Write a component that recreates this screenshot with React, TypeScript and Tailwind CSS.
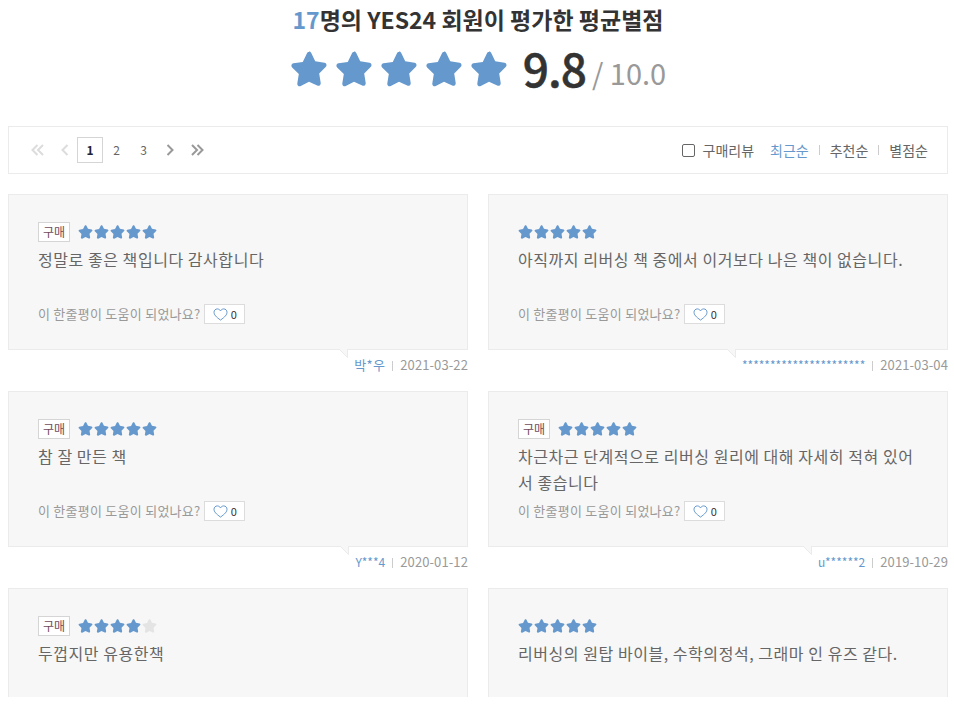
import React from 'react';

const reviews = [
  { buy: true, score: 5, text: '정말로 좋은 책입니다 감사합니다', user: '박*우', date: '2021-03-22', ko: true },
  { buy: false, score: 5, text: '아직까지 리버싱 책 중에서 이거보다 나은 책이 없습니다.', user: '**********************', date: '2021-03-04' },
  { buy: true, score: 5, text: '참 잘 만든 책', user: 'Y***4', date: '2020-01-12' },
  { buy: true, score: 5, text: '차근차근 단계적으로 리버싱 원리에 대해 자세히 적혀 있어서 좋습니다', user: 'u******2', date: '2019-10-29' },
  { buy: true, score: 4, text: '두껍지만 유용한책', user: '', date: '' },
  { buy: false, score: 5, text: '리버싱의 원탑 바이블, 수학의정석, 그래마 인 유즈 같다.', user: '', date: '' },
];

const STAR = 'M12 1.6c.6 0 1.1.3 1.4.9l2.7 5.6 6.1.9c1.3.2 1.8 1.8.9 2.7l-4.4 4.4 1 6.2c.2 1.3-1.1 2.3-2.3 1.7L12 21.5l-5.4 2.9c-1.2.6-2.5-.4-2.3-1.7l1-6.2-4.4-4.4c-.9-.9-.4-2.5.9-2.7l6.1-.9 2.7-5.6c.3-.6.8-.9 1.4-.9z';

function Star({ size, on = true }: { size: number; on?: boolean }) {
  return (
    <svg width={size} height={size} viewBox="0 0 24 25" className="block shrink-0">
      <path d={STAR} fill={on ? '#6598cd' : '#e4e4e4'} />
    </svg>
  );
}

function Chevron({ double, left, color }: { double?: boolean; left?: boolean; color: string }) {
  return (
    <svg width="14" height="12" viewBox="0 0 14 12" fill="none" stroke={color} strokeWidth="2" className={left ? 'rotate-180' : ''}>
      {double ? (
        <>
          <path d="M2 1l5 5-5 5" />
          <path d="M7.5 1l5 5-5 5" />
        </>
      ) : (
        <path d="M4.5 1l5 5-5 5" />
      )}
    </svg>
  );
}

function ReviewCard({ r }: { r: (typeof reviews)[number] }) {
  return (
    <div>
      <div className="h-[156px] border border-[#ebebeb] bg-[#f7f7f7] pl-[29px] pr-[30px] pt-[27px]">
        <div className="flex h-[20px] items-center">
          {r.buy && (
            <span className="mr-[8px] flex h-[20px] w-[32px] items-center justify-center border border-[#d5d5d5] bg-white pb-[1px] text-[12px] text-[#6f4a5c]">
              구매
            </span>
          )}
          <span className="-mt-[2px] flex gap-[1px]">
            {[1, 2, 3, 4, 5].map((i) => (
              <Star key={i} size={15} on={i <= r.score} />
            ))}
          </span>
        </div>
        <p className="mt-[4px] h-[52px] text-[16px] leading-[26px] tracking-[0.55px] text-[#666]">{r.text}</p>
        {/* last row is cut off by the page before this line */}
        {r.user && (
          <div className="mt-[6px] flex h-[20px] items-center text-[13px] tracking-[0.25px] text-[#999]">
            <span>이 한줄평이 도움이 되었나요?</span>
            <span className="ml-[4px] flex h-[20px] w-[41px] items-center justify-center gap-[3px] border border-[#dcdcdc] bg-white text-[11px] text-[#333]">
              <svg width="15" height="13" viewBox="0 0 24 21" fill="none" stroke="#6598cd" strokeWidth="1.6">
                <path d="M12 19.5C5 14.5 1.5 11 1.5 6.8 1.5 3.7 3.9 1.5 6.8 1.500c2.100 0 4 1.100 5.200 3.100 1.200-2 3.100-3.100 5.200-3.100 2.900 0 5.300 2.200 5.300 5.300 0 4.200-3.500 7.700-10.500 12.700z" />
              </svg>
              0
            </span>
          </div>
        )}
      </div>
      <div className="flex h-[41px] items-start justify-end pt-[6px] text-[13px] leading-[18px]">
        {r.user && (
          <div className="relative flex">
            <svg width="9" height="9" viewBox="0 0 9 9" className="absolute -left-[15px] -top-[7px]">
              <path d="M0 0L8.500 8.500V0z" fill="#f7f7f7" />
              <path d="M8.500 8.500V0M0 0L8.500 8.500" stroke="#ebebeb" fill="none" />
            </svg>
            <span className={r.ko ? 'tracking-[0.3px] text-[#6598cd]' : 'text-[12px] text-[#6598cd]'}>{r.user}</span>
            <span className="mx-[7px] mt-[5px] h-[10px] w-px bg-[#ccc]" />
            <span className="tracking-[0.1px] text-[#999]">{r.date}</span>
          </div>
        )}
      </div>
    </div>
  );
}

export default function App() {
  return (
    <div
      className="h-[697px] overflow-hidden bg-white pl-2 pr-[6px]"
      style={{ fontFamily: '"Noto Sans CJK KR", "Noto Sans", sans-serif' }}
    >
      <h2 className="h-[38px] text-center text-[23px] font-bold leading-[38px] text-[#333]">
        <span className="text-[#6598cd]">17</span>명의 YES24 회원이 평가한 평균별점
      </h2>
      <div className="mt-[2px] flex h-[56px] items-center justify-center">
        <span className="flex gap-[7px]">
          {[1, 2, 3, 4, 5].map((i) => (
            <Star key={i} size={38} />
          ))}
        </span>
        <strong className="-mt-[3px] ml-[15px] text-[46px] font-medium leading-[56px] tracking-[-1px] text-[#333] [-webkit-text-stroke:0.5px_#333]">9.8</strong>
        <span className="ml-[6px] mt-[8px] text-[29px] font-normal leading-[40px] text-[#999]">/ 10.0</span>
      </div>

      <div className="mt-[30px] flex h-[48px] items-center justify-between border border-[#ebebeb] pl-[22px] pr-[19px]">
        <div className="flex items-center text-[12px] text-[#666]">
          <span className="w-[27px]"><Chevron double left color="#dcdcdc" /></span>
          <span className="w-[19px]"><Chevron left color="#dcdcdc" /></span>
          <span className="flex h-[26px] w-[26px] items-center justify-center border border-[#d5d5d5] font-bold text-[#223]">1</span>
          <span className="w-[27px] text-center">2</span>
          <span className="w-[27px] text-center">3</span>
          <span className="ml-[6px] w-[27px]"><Chevron color="#999" /></span>
          <span className="w-[20px]"><Chevron double color="#999" /></span>
        </div>
        <div className="flex items-center text-[14px] text-[#666]">
          <span className="mr-[8px] h-[13px] w-[13px] rounded-[2px] border border-[#666] bg-white" />
          <span>구매리뷰</span>
          <span className="ml-[16px] text-[#6598cd]">최근순</span>
          <span className="mx-[10px] h-[10px] w-px bg-[#ccc]" />
          <span>추천순</span>
          <span className="mx-[10px] h-[10px] w-px bg-[#ccc]" />
          <span>별점순</span>
        </div>
      </div>

      <div className="mt-[20px] grid grid-cols-2 gap-x-5">
        {reviews.map((r, i) => (
          <ReviewCard key={i} r={r} />
        ))}
      </div>
    </div>
  );
}
